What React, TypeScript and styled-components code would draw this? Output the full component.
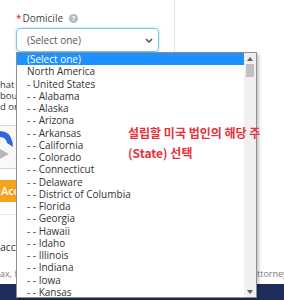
import React from "react"
import styled, { createGlobalStyle } from "styled-components"

const GlobalStyle = createGlobalStyle`
  html, body {
    margin: 0;
    padding: 0;
    background: #fff;
    overflow: hidden;
  }
`

const options = [
  "(Select one)",
  "North America",
  "- United States",
  "- - Alabama",
  "- - Alaska",
  "- - Arizona",
  "- - Arkansas",
  "- - California",
  "- - Colorado",
  "- - Connecticut",
  "- - Delaware",
  "- - District of Columbia",
  "- - Florida",
  "- - Georgia",
  "- - Hawaii",
  "- - Idaho",
  "- - Illinois",
  "- - Indiana",
  "- - Iowa",
  "- - Kansas",
]

const Page = styled.div`
  position: relative;
  width: 284px;
  height: 300px;
  overflow: hidden;
  display: flex;
  flex-direction: column;
  font-family: "Open Sans", "Noto Sans", sans-serif;
  color: #333;
`

const Columns = styled.div`
  display: grid;
  grid-template-columns: 175px 1fr;
  height: 262px;
`

const Main = styled.div`
  border-right: 1px solid #dfe4ea;
  padding-top: 11px;
  display: flex;
  flex-direction: column;
`

const Field = styled.div`
  padding-left: 16px;
`

const Label = styled.div`
  display: flex;
  align-items: center;
  height: 14px;
  font-size: 10px;
  color: #444;
  margin-bottom: 3px;
`

const Required = styled.span`
  color: #d9302c;
  margin-right: 1px;
`

const Help = styled.span`
  width: 9px;
  height: 9px;
  border-radius: 50%;
  background: #b3bac2;
  color: #fff;
  font-size: 7px;
  font-weight: 700;
  line-height: 9px;
  text-align: center;
  margin-left: 6px;
`

const SelectBox = styled.div`
  box-sizing: border-box;
  width: 143px;
  height: 24px;
  border: 1px solid #7cc6ea;
  border-radius: 4px;
  box-shadow: 0 0 3px rgba(102, 175, 233, 0.55);
  display: flex;
  align-items: center;
  justify-content: space-between;
  padding: 0 5px 0 10px;
  font-size: 10px;
  color: #555;
`

// only the left edge of this copy peeks out from under the open list
const Notice = styled.p`
  margin: 27px 0 0 0;
  font-size: 9.5px;
  line-height: 11px;
  color: #333;
  white-space: nowrap;
`

const Captcha = styled.div`
  margin-top: 13px;
  height: 44px;
  box-sizing: border-box;
  border-top: 1px solid #d3d3d3;
  border-bottom: 1px solid #d3d3d3;
  background: #f9f9f9;
  padding-top: 4px;
`

const AcceptButton = styled.div`
  margin-top: 11px;
  height: 22px;
  background: #f5a21c;
  color: #fff;
  font-size: 11px;
  font-weight: 600;
  line-height: 22px;
  padding-left: 1px;
`

const Rule = styled.div`
  margin-top: 12px;
  border-top: 1px solid #e6e6e6;
`

const AcceptText = styled.div`
  margin-top: 25px;
  font-size: 10.5px;
  line-height: 14px;
  color: #333;
  white-space: nowrap;
`

const FootNote = styled.div`
  display: grid;
  grid-template-columns: 257px 1fr;
  align-items: center;
  height: 22px;
  font-size: 9px;
  color: #7a7a7a;
  white-space: nowrap;
`

const NavyBar = styled.div`
  height: 16px;
  background: #1e2d5c;
`

const Dropdown = styled.div`
  position: absolute;
  top: 52px;
  left: 16px;
  width: 241px;
  height: 246px;
  box-sizing: border-box;
  border: 1px solid #8e8e8e;
  background: #fff;
  box-shadow: 2px 2px 3px rgba(0, 0, 0, 0.22);
  display: flex;
`

const List = styled.div`
  flex: 1;
  display: flex;
  flex-direction: column;
`

const Option = styled.div<{ $active?: boolean }>`
  height: 12.25px;
  line-height: 12.25px;
  padding-left: 10px;
  font-size: 10px;
  white-space: nowrap;
  color: ${(p) => (p.$active ? "#fff" : "#333")};
  background: ${(p) => (p.$active ? "#1e90ff" : "transparent")};
`

const Scrollbar = styled.div`
  width: 12px;
  background: #f0f0f0;
  display: flex;
  flex-direction: column;
  align-items: center;
`

const ArrowBox = styled.div`
  height: 11px;
  display: flex;
  align-items: center;
  justify-content: center;
`

const Thumb = styled.div`
  width: 8px;
  height: 13px;
  background: #c1c1c1;
`

const Track = styled.div`
  flex: 1;
`

const Annotation = styled.div`
  position: absolute;
  left: 128px;
  top: 123px;
  font-family: "Noto Sans CJK KR", "Noto Sans", sans-serif;
  font-size: 12px;
  font-weight: 700;
  line-height: 20px;
  color: #e8303c;
  white-space: nowrap;
`

const Chevron = () => (
  <svg width="8" height="5" viewBox="0 0 8 5">
    <path d="M1 1 L4 4 L7 1" fill="none" stroke="#555" strokeWidth="1.6" />
  </svg>
)

const Triangle = ({ down }: { down?: boolean }) => (
  <svg width="6" height="4" viewBox="0 0 6 4">
    <path d={down ? "M0 0 H6 L3 4 Z" : "M0 4 H6 L3 0 Z"} fill="#606060" />
  </svg>
)

const CaptchaLogo = () => (
  <svg width="14" height="30" viewBox="0 0 14 30">
    <path d="M0 1 Q10 1 12.5 12 L13 17 L7 13 Q6 7 0 7 Z" fill="#2f66d8" />
    <path d="M0 19 L9 24 L0 29 Z" fill="#b7b7b7" />
  </svg>
)

export default function App() {
  return (
    <>
      <GlobalStyle />
      <Page>
        <Columns>
          <Main>
            <Field>
              <Label>
                <Required>*</Required>Domicile<Help>?</Help>
              </Label>
              <SelectBox>
                (Select one)
                <Chevron />
              </SelectBox>
            </Field>
            <Notice>
              hat y
              <br />
              bou
              <br />
              d on
            </Notice>
            <Captcha>
              <CaptchaLogo />
            </Captcha>
            <AcceptButton>Acc</AcceptButton>
            <Rule />
            <AcceptText>acc</AcceptText>
          </Main>
          <div />
        </Columns>
        <FootNote>
          <span>ax, fi</span>
          <span>ttorney</span>
        </FootNote>
        <NavyBar />

        <Dropdown>
          <List>
            {options.map((o, i) => (
              <Option key={o} $active={i === 0}>
                {o}
              </Option>
            ))}
          </List>
          <Scrollbar>
            <ArrowBox>
              <Triangle />
            </ArrowBox>
            <Thumb />
            <Track />
            <ArrowBox>
              <Triangle down />
            </ArrowBox>
          </Scrollbar>
        </Dropdown>

        <Annotation>
          설립할 미국 법인의 해당 주
          <br />
          (State) 선택
        </Annotation>
      </Page>
    </>
  )
}
